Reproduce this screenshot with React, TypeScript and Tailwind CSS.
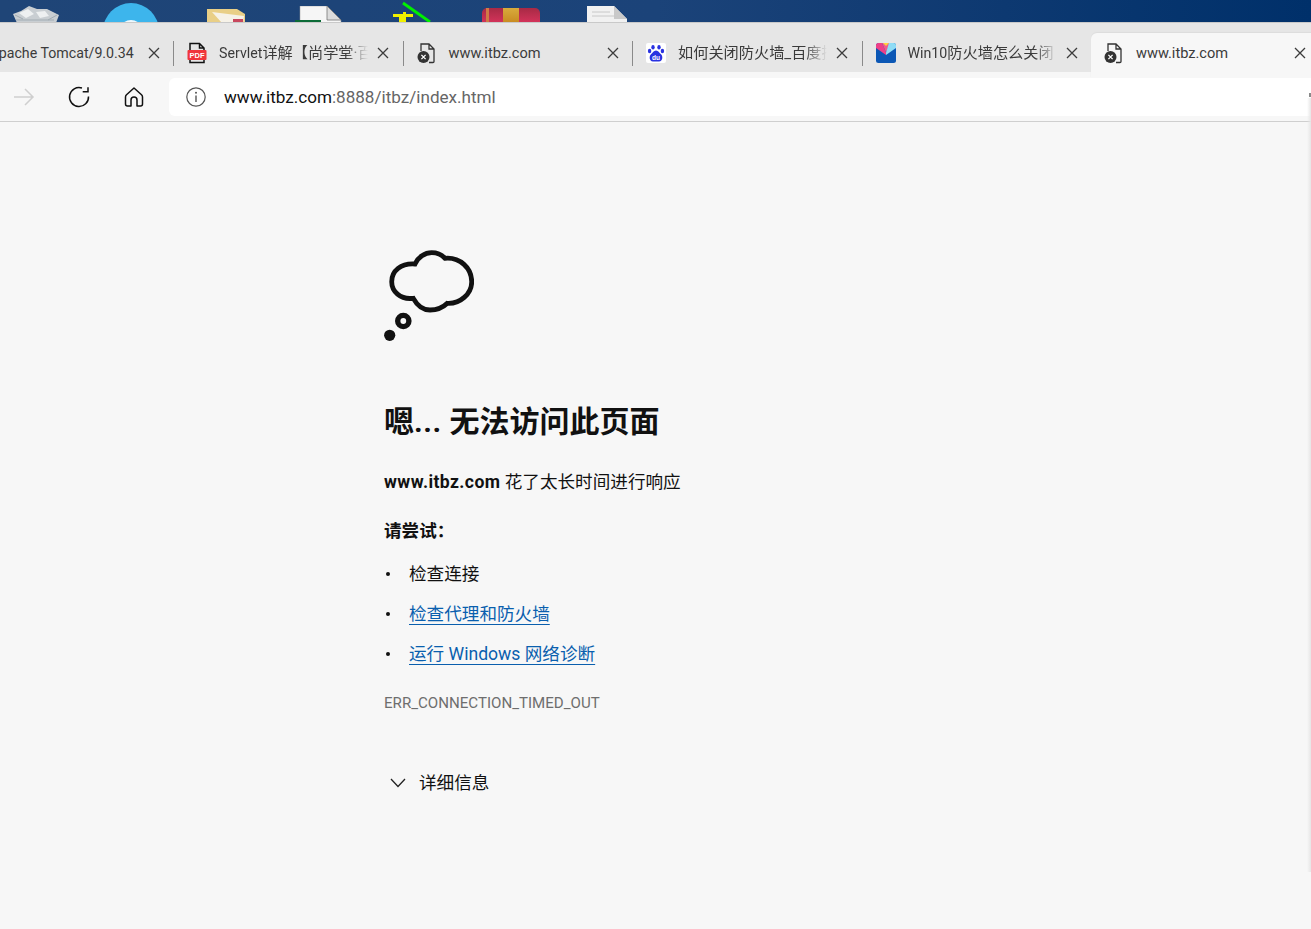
import React from "react";

const FONT = "[font-family:'Roboto','Noto_Sans_CJK_SC',sans-serif]";

function CloseIcon() {
  return (
    <svg width="12" height="12" viewBox="0 0 12 12" className="shrink-0">
      <path d="M1 1L11 11M11 1L1 11" stroke="#3c3c3c" strokeWidth="1.3" fill="none" />
    </svg>
  );
}

function PdfIcon() {
  return (
    <svg width="20" height="22" viewBox="0 0 20 22">
      <path d="M3 9V1.500h9.500L17 6v3M3 17v3.500h14V17M12.500 1.500V6H17" fill="none" stroke="#111" strokeWidth="1.500" />
      <rect x="0.500" y="8" width="19" height="10" rx="1" fill="#f0353b" />
      <text x="10" y="15.700" textAnchor="middle" fontSize="7.500" fontWeight="700" fill="#fff" fontFamily="Liberation Sans, sans-serif">PDF</text>
    </svg>
  );
}

function BrokenFileIcon() {
  return (
    <svg width="20" height="22" viewBox="0 0 20 22">
      <path d="M4 9V2h8l5 5v12.5a1 1 0 0 1-1 1h-4M12 2v5h5" fill="none" stroke="#333" strokeWidth="1.3" />
      <circle cx="6.5" cy="15" r="6" fill="#333" />
      <path d="M4.4 12.9l4.2 4.2M8.6 12.9l-4.2 4.2" stroke="#fff" strokeWidth="1.3" />
    </svg>
  );
}

function BaiduIcon() {
  return (
    <svg width="20" height="20" viewBox="0 0 20 20">
      <rect width="20" height="20" rx="2" fill="#fff" />
      <g fill="#2932e1">
        <ellipse cx="7" cy="4.2" rx="1.7" ry="2.2" />
        <ellipse cx="13" cy="4.2" rx="1.7" ry="2.2" />
        <ellipse cx="3.6" cy="8" rx="1.7" ry="2.2" />
        <ellipse cx="16.4" cy="8" rx="1.7" ry="2.2" />
        <path d="M10 7.5c-2.5 0-3 2.3-5 3.8C3 13 3 18.5 7 18.5h6c4 0 4-5.500 2-7.200C13 9.800 12.500 7.500 10 7.500z" />
      </g>
      <text x="10" y="17.300" textAnchor="middle" fontSize="6.500" fontWeight="700" fill="#fff" fontFamily="Liberation Sans, sans-serif">du</text>
    </svg>
  );
}

function WinIcon() {
  return (
    <svg width="20" height="20" viewBox="0 0 20 20">
      <rect width="20" height="20" rx="2.500" fill="#0b57b5" />
      <path d="M0 2.500A2.500 2.500 0 0 1 2.500 0H6l4 9.500V12L0 5z" fill="#ee3f88" />
      <path d="M6 0h8l-4 9.500z" fill="#f05a8c" />
      <path d="M7 0h6l-3 3z" fill="#ffd23c" />
      <path d="M13 0h4.500A2.500 2.500 0 0 1 20 2.500V5l-10 7V9.500z" fill="#8fdcf5" />
    </svg>
  );
}

type TabProps = { icon?: React.ReactNode; title: React.ReactNode; fade?: boolean; first?: boolean };

function Tab({ icon, title, fade, first }: TabProps) {
  return (
    <div className="relative flex h-[50px] w-[229.5px] shrink-0 items-center pt-[12px]">
      {!first && <div className="h-[25px] w-px bg-[#8a8a8a]" />}
      <div className={first ? "ml-[14px] w-[20px]" : "ml-[13px] flex w-[20px] justify-center"}>{icon}</div>
      <div
        className={
          "ml-[12px] w-[149px] pt-[1px] text-[15.2px] whitespace-nowrap text-[#3b3b3b] " +
          (fade ? "overflow-hidden [mask-image:linear-gradient(to_right,black_85%,transparent)]" : "")
        }
      >
        {title}
      </div>
      <div className="ml-[9px]">
        <CloseIcon />
      </div>
    </div>
  );
}

function Latin({ children }: { children: React.ReactNode }) {
  return <span className="text-[14.2px]">{children}</span>;
}

function CloudIcon() {
  return (
    <svg width="90" height="92" viewBox="0 0 90 92" className="block">
      <path
        d="M31 14C34 7 41 2.700 47.700 2.700C53 2.700 58 5 61 8.300C76 7 87.700 18 87.700 31.700C87.700 44 76 54 63.300 53.300C59 57.500 52 60 46 60C39 60 33 55 29.300 48.300C16 50 7.700 41 7.700 31.700C7.700 21 17 13 31 14Z"
        fill="none"
        stroke="#111"
        strokeWidth="4.800"
      />
      <circle cx="19.300" cy="71" r="5.600" fill="none" stroke="#111" strokeWidth="5.400" />
      <circle cx="5.700" cy="85.300" r="5.600" fill="#111" />
    </svg>
  );
}

function DesktopIcons() {
  return (
    <>
      <svg width="50" height="18" viewBox="0 0 50 18" className="absolute top-[5px] left-[11px]">
        <path d="M2 9L10 6 18 1l8 3 10 0 12 6-3 8H6z" fill="#c9ced2" />
        <path d="M8 8l9-4 6 5-8 4zM25 7l9-1 4 5-9 2z" fill="#eef0f1" />
        <path d="M4 10l8 4M46 10l-9 5M5 15l38 0" stroke="#a2acb3" strokeWidth="1" />
      </svg>
      <div className="absolute top-[3px] left-[103px] h-[56px] w-[56px] rounded-full bg-[#3db5ec]">
        <div className="mx-auto mt-[17px] h-[24px] w-[24px] rounded-full bg-[#eef8fd]" />
      </div>
      <svg width="40" height="14" viewBox="0 0 40 14" className="absolute top-[9px] left-[206px]">
        <path d="M1 0l30 0 8 5v9H1z" fill="#e9cf87" />
        <path d="M6 3l32 4-1 7H16z" fill="#f6f2e8" />
        <path d="M27 10h10v4H27z" fill="#c8485e" />
      </svg>
      <svg width="48" height="17" viewBox="0 0 48 17" className="absolute top-[6px] left-[295px]">
        <path d="M5 0h27l14 14v3H5z" fill="#f6f6f6" stroke="#999" strokeWidth="0.500" />
        <path d="M32 0l14 14H32z" fill="#dcdcdc" stroke="#777" strokeWidth="0.800" />
        <rect x="0" y="14" width="26" height="3" fill="#0c6b37" />
      </svg>
      <svg width="44" height="22" viewBox="0 0 44 22" className="absolute top-[0px] left-[392px]">
        <path d="M11 3l27 19" stroke="#00f000" strokeWidth="2.800" />
        <path d="M1 14h10v-2h3v2h7v3H14v5H7v-5H1z" fill="#f0f000" />
      </svg>
      <div className="absolute top-[8px] left-[482px] flex h-[14px] w-[58px] rounded-t-[5px] bg-gradient-to-b from-[#a82a45] to-[#d2335a]">
        <div className="ml-[4px] h-full w-[3px] bg-[#d07a45]" />
        <div className="ml-[14px] h-full w-[16px] bg-gradient-to-b from-[#d8ab3c] to-[#c98c22]" />
      </div>
      <svg width="42" height="17" viewBox="0 0 42 17" className="absolute top-[6px] left-[586px]">
        <path d="M1 0h27l13 13v4H1z" fill="#f1f1f1" />
        <path d="M28 0l13 13H28z" fill="#c9c9c9" />
        <path d="M6 6h18M6 10h24" stroke="#c8c8c8" />
      </svg>
    </>
  );
}

function ListBullet({ children }: { children: React.ReactNode }) {
  return (
    <li className="flex h-[40px] items-center">
      <span className="ml-[2px] h-[4px] w-[4px] rounded-full bg-[#111]" />
      <span className="ml-[19px] flex items-center">{children}</span>
    </li>
  );
}

export default function App() {
  return (
    <div className={"relative flex h-[929px] w-[1311px] flex-col overflow-hidden bg-[#f7f7f7] " + FONT}>
      <div className="relative h-[22px] shrink-0 overflow-hidden bg-gradient-to-r from-[#1f4577] via-[#1b4379] to-[#00306a]">
        <DesktopIcons />
      </div>

      <div className="flex h-[50px] shrink-0 items-center bg-[#e6e6e6] shadow-[inset_0_1px_0_#c9c9c9]">
        <div className="ml-[-56.5px] flex">
          <Tab first title={<Latin>Apache Tomcat/9.0.34</Latin>} />
          <Tab icon={<PdfIcon />} title={<><Latin>Servlet</Latin>详解【尚学堂·百战程序员】</>} fade />
          <Tab icon={<BrokenFileIcon />} title={<span className="text-[14.6px]">www.itbz.com</span>} />
          <Tab icon={<BaiduIcon />} title="如何关闭防火墙_百度搜索" fade />
          <Tab icon={<WinIcon />} title={<><Latin>Win10</Latin>防火墙怎么关闭</>} fade />
        </div>
      </div>

      <div className="relative flex h-[50px] shrink-0 items-center border-b border-[#cfcfcf] bg-[#f7f7f7]">
        <div className="absolute top-[-39px] left-[1091px] flex h-[45px] w-[230px] items-center rounded-t-[6px] bg-[#f7f7f7] pb-[5px] pl-[13px] shadow-[0_-1px_1px_#dcdcdc]">
          <div className="w-[20px]">
            <BrokenFileIcon />
          </div>
          <div className="ml-[12px] w-[158px] pt-[1px] text-[14.6px] whitespace-nowrap text-[#3b3b3b]">www.itbz.com</div>
          <CloseIcon />
        </div>

        <svg width="24" height="20" viewBox="0 0 24 20" className="ml-[12px]">
          <path d="M2 10H21M13 2l8 8-8 8" fill="none" stroke="#cfcfcf" strokeWidth="1.500" />
        </svg>
        <svg width="24" height="24" viewBox="0 0 24 24" className="ml-[31px]">
          <path d="M15 3A9.500 9.500 0 1 0 21.500 11.500" fill="none" stroke="#111" strokeWidth="1.500" />
          <path d="M15.700 6.700H21V2.300" fill="none" stroke="#111" strokeWidth="1.500" />
        </svg>
        <svg width="22" height="22" viewBox="0 0 22 22" className="ml-[32px]">
          <path d="M11 2L3.500 8.800C2.800 9.500 2.500 10 2.500 11V18a2 2 0 0 0 2 2H8V14a3 3 0 0 1 6 0V20h3.500a2 2 0 0 0 2-2V11c0-1-.3-1.500-1-2.200z" fill="none" stroke="#111" strokeWidth="1.500" strokeLinejoin="round" />
        </svg>
        <div className="ml-[24px] flex h-[38px] flex-1 items-center rounded-l-[6px] bg-white pl-[17px]">
          <svg width="20" height="20" viewBox="0 0 20 20">
            <circle cx="10" cy="10" r="9.200" fill="none" stroke="#555" strokeWidth="1.200" />
            <path d="M10 8.500V15" stroke="#555" strokeWidth="1.400" />
            <circle cx="10" cy="5.800" r="1" fill="#555" />
          </svg>
          <div className="ml-[18px] pt-[2px] text-[17.1px] whitespace-nowrap text-[#666]">
            <span className="text-[#111]">www.itbz.com</span>:8888/itbz/index.html
          </div>
        </div>
      </div>

      <main className="pt-[128px] pl-[384px] text-[17.6px] text-[#111]">
        <CloudIcon />
        <h1 className="mt-[59px] flex h-[40px] items-center text-[30px] font-bold whitespace-pre">嗯<span className="tracking-[0.5px]">... </span>无法访问此页面</h1>
        <p className="mt-[29px] flex h-[24px] items-center whitespace-pre">
          <b className="font-bold tracking-[0.4px]">www.itbz.com</b> 花了太长时间进行响应
        </p>
        <p className="mt-[25px] flex h-[24px] items-center font-semibold">请尝试：</p>
        <ul className="mt-[11px]">
          <ListBullet>检查连接</ListBullet>
          <ListBullet>
            <a className="text-[#0a5fae] underline underline-offset-[4px]">检查代理和防火墙</a>
          </ListBullet>
          <ListBullet>
            <a className="text-[#0a5fae] underline underline-offset-[4px]">运行 Windows 网络诊断</a>
          </ListBullet>
        </ul>
        <div className="mt-[19px] flex h-[20px] items-center text-[15.1px] text-[#6e6e6e]">ERR_CONNECTION_TIMED_OUT</div>
        <div className="mt-[58px] flex h-[24px] items-center pl-[6px]">
          <svg width="16" height="10" viewBox="0 0 16 10">
            <path d="M1 1l7 7.500L15 1" fill="none" stroke="#222" strokeWidth="1.300" />
          </svg>
          <span className="ml-[13px]">详细信息</span>
        </div>
      </main>

      <div className="absolute top-[98px] left-[1307px] h-[774px] w-[4px] bg-gradient-to-r from-transparent to-[#e6e6e6]" />
      <div className="absolute top-[93px] left-[1309px] h-[4px] w-[2px] bg-[#8a8a8a]" />
    </div>
  );
}
